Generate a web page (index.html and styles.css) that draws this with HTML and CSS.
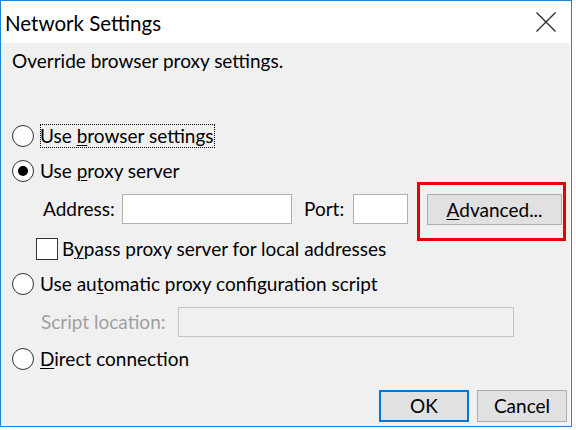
FILE: index.html
```html
<!DOCTYPE html>
<html lang="en">
<head>
<meta charset="utf-8">
<title>Network Settings</title>
<link rel="stylesheet" href="styles.css">
</head>
<body>
<div class="window">
  <div class="titlebar">
    <span class="title">Network Settings</span>
    <svg class="close" width="20" height="20" viewBox="0 0 20 20" aria-label="Close">
      <path d="M0.5 0.5 L19.5 19.5 M19.5 0.5 L0.5 19.5" stroke="#2b2b2b" stroke-width="1.3" fill="none"/>
    </svg>
  </div>
  <div class="content">
    <div class="intro">Override browser proxy settings.</div>

    <div class="row radio-row r1">
      <span class="radio"></span>
      <span class="label focus">Use <u>b</u>rowser settings</span>
    </div>

    <div class="row radio-row r2">
      <span class="radio checked"></span>
      <span class="label">Use <u>p</u>roxy server</span>
    </div>

    <div class="row field-row address-row">
      <span class="field-label addr-label">Address:</span>
      <span class="textbox addr-box"></span>
      <span class="field-label port-label">Port:</span>
      <span class="textbox port-box"></span>
      <span class="button adv-button"><u>A</u>dvanced...</span>
    </div>

    <div class="row check-row">
      <span class="checkbox"></span>
      <span class="label">B<u>y</u>pass proxy server for local addresses</span>
    </div>

    <div class="row radio-row r3">
      <span class="radio"></span>
      <span class="label">Use au<u>t</u>omatic proxy configuration script</span>
    </div>

    <div class="row field-row script-row">
      <span class="field-label script-label">Script location:</span>
      <span class="textbox script-box"></span>
    </div>

    <div class="row radio-row r4">
      <span class="radio"></span>
      <span class="label"><u>D</u>irect connection</span>
    </div>

    <div class="buttons">
      <span class="button default-button">OK</span>
      <span class="button">Cancel</span>
    </div>
  </div>
  <div class="annotation"></div>
</div>
</body>
</html>
```
FILE: styles.css
```css
* { box-sizing: border-box; }

html, body {
  margin: 0;
  padding: 0;
  background: #ffffff;
}

body {
  font-family: "Lato", "Noto Sans", sans-serif;
  font-size: 19px;
  line-height: 24px;
  color: #000;
}

.window {
  position: relative;
  width: 572px;
  height: 427px;
  border: 1px solid #1c84d8;
  background: #ffffff;
  display: flex;
  flex-direction: column;
}

.titlebar {
  height: 42px;
  flex: none;
  display: flex;
  align-items: center;
  padding-left: 4px;
  padding-top: 1px;
  background: #ffffff;
}

.title {
  font-size: 20.5px;
  color: #000;
}

.close {
  margin-left: auto;
  margin-right: 15px;
  margin-top: -1px;
  display: block;
}

.content {
  flex: 1;
  background: #f0f0f0;
  margin-right: 1px;
  display: flex;
  flex-direction: column;
}

.intro {
  margin: 6px 0 0 11px;
  height: 24px;
}

.row {
  display: flex;
  align-items: center;
}

.radio-row {
  height: 24px;
  margin-left: 11px;
}

.r1 { margin-top: 51px; }
.r2 { margin-top: 11px; }
.r3 { margin-top: 11px; }
.r4 { margin-top: 10px; }

.radio {
  width: 22px;
  height: 22px;
  border: 1px solid #333333;
  border-radius: 50%;
  background: #ffffff;
  flex: none;
  display: flex;
  align-items: center;
  justify-content: center;
}

.radio.checked::after {
  content: "";
  width: 10px;
  height: 10px;
  border-radius: 50%;
  background: #000;
}

.radio-row .label {
  margin-left: 6px;
}

.label {
  white-space: nowrap;
  padding-right: 1px;
}

.focus {
  outline: 1px dotted #000;
  outline-offset: -1px;
}

u {
  text-decoration: underline;
  text-decoration-thickness: 1px;
  text-underline-offset: 2px;
}

.field-row {
  height: 30px;
  align-items: flex-start;
}

.field-label {
  line-height: 30px;
  white-space: nowrap;
}

.address-row {
  margin: 11px 0 0 42px;
}

.addr-label { width: 79px; }

.textbox {
  height: 30px;
  border: 1px solid #b0b0b0;
  background: #ffffff;
  flex: none;
}

.addr-box { width: 170px; }

.port-label {
  margin-left: 12px;
  width: 49px;
}

.port-box { width: 55px; }

.button {
  height: 32px;
  width: 90px;
  border: 1px solid #adadad;
  background: #e1e1e1;
  display: flex;
  align-items: center;
  justify-content: center;
  white-space: nowrap;
  flex: none;
}

.adv-button {
  margin-left: 19px;
  width: 135px;
  height: 31px;
}

.check-row {
  height: 24px;
  margin: 13px 0 0 35px;
}

.checkbox {
  width: 22px;
  height: 22px;
  border: 1px solid #333333;
  background: #ffffff;
  flex: none;
}

.check-row .label {
  margin-left: 4px;
}

.script-row {
  margin: 11px 0 0 40px;
}

.script-label {
  width: 137px;
  color: #a0a0a0;
}

.script-box {
  width: 336px;
  border-color: #c4c4c4;
  background: #f0f0f0;
}

.buttons {
  margin-top: 19px;
  display: flex;
  justify-content: flex-end;
  gap: 8px;
  padding-right: 3px;
}

.default-button {
  border: 2px solid #0078d7;
}

.annotation {
  position: absolute;
  left: 416px;
  top: 181px;
  width: 149px;
  height: 59px;
  border: 3px solid #e60000;
  pointer-events: none;
}
```
